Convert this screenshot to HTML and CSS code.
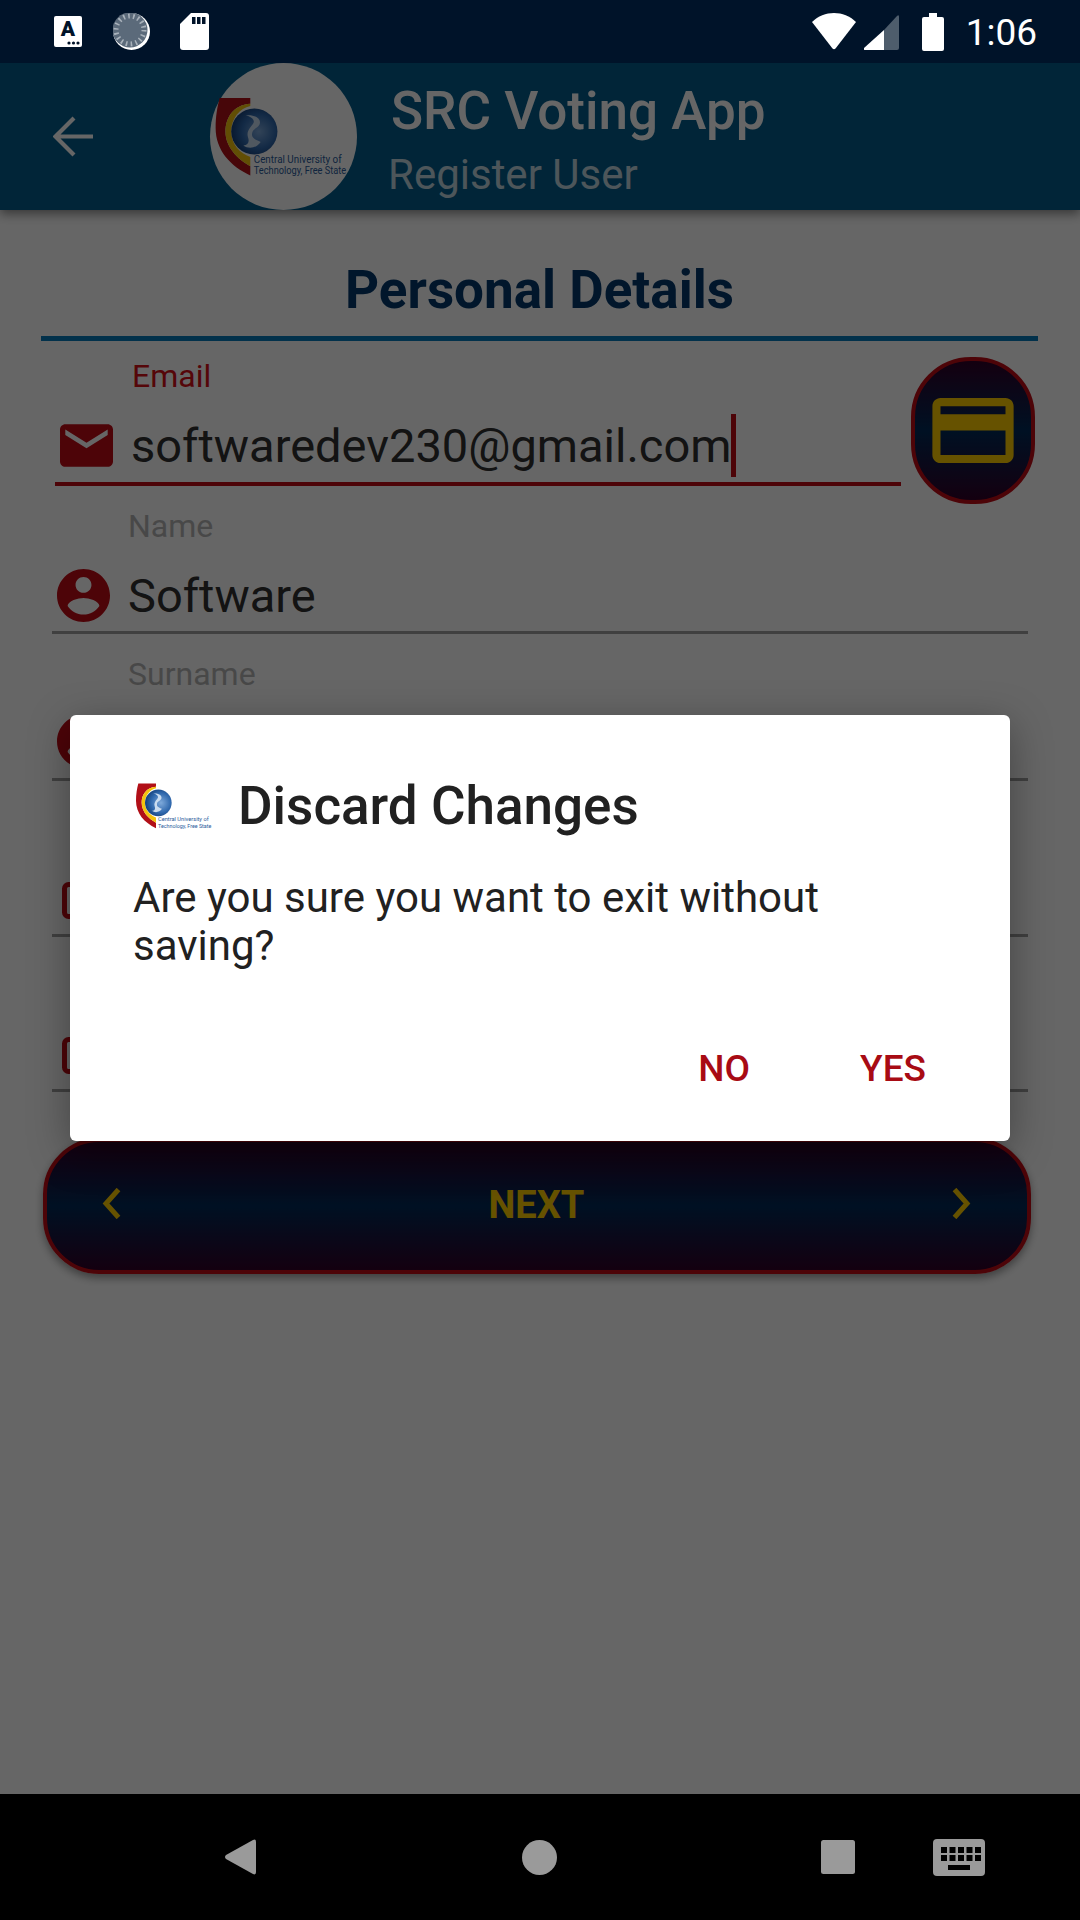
FILE: index.html
```html
<!DOCTYPE html>
<html lang="en">
<head>
<meta charset="utf-8">
<title>SRC Voting App</title>
<link rel="stylesheet" href="styles.css">
</head>
<body>
<svg class="defs" width="0" height="0" aria-hidden="true">
  <defs>
    <radialGradient id="orb" cx="0.6" cy="0.5" r="0.62">
      <stop offset="0" stop-color="#7ea9da"/>
      <stop offset="0.6" stop-color="#2f68ad"/>
      <stop offset="1" stop-color="#123a72"/>
    </radialGradient>
    <symbol id="cut-logo" viewBox="0 0 228 135">
      <path fill="#b10f17" d="M7 0 H60 V10 C30 12 17 35 17 58 C17 85 38 106 60 118 V134 C25 118 0 90 0 52 C0 32 3 14 7 0Z"/>
      <path fill="#f4c20d" d="M60 10 C30 12 17 35 17 58 C17 85 38 106 60 118 V102 C42 96 27 80 27 58 C27 35 42 18 60 14Z"/>
      <circle cx="67" cy="58" r="40" fill="url(#orb)"/>
      <path fill="#c9dbef" d="M52 30 C68 28 80 36 76 46 C72 54 64 52 63 62 C62 70 70 72 78 76 C70 88 56 88 48 82 C56 82 59 76 56 68 C52 56 64 48 66 42 C67 36 60 32 52 30Z"/>
      <text class="logo-text" x="66" y="112" textLength="152" lengthAdjust="spacingAndGlyphs">Central University of</text>
      <text class="logo-text" x="66" y="132" textLength="160" lengthAdjust="spacingAndGlyphs">Technology, Free State</text>
    </symbol>
  </defs>
</svg>

<div class="status">
  <div class="status-left">
    <svg class="i-a" viewBox="0 0 28 31"><rect width="28" height="31" rx="2" fill="#fff"/><text class="a-glyph" x="14" y="20" text-anchor="middle">A</text><circle cx="15" cy="27" r="1.6" fill="#001329"/><circle cx="19.5" cy="27" r="1.6" fill="#001329"/><circle cx="24" cy="27" r="1.6" fill="#001329"/></svg>
    <svg class="i-sync" viewBox="0 0 37 37"><circle cx="18.5" cy="18.5" r="18.5" fill="#fff"/><circle cx="17" cy="17" r="17.5" fill="#5b6a7a"/><circle cx="17" cy="17" r="14" fill="none" stroke="#a9b2bb" stroke-width="5" stroke-dasharray="1.6 3.3"/></svg>
    <svg class="i-sd" viewBox="0 0 29 37"><path fill="#fff" d="M11 0 H26 Q29 0 29 3 V34 Q29 37 26 37 H3 Q0 37 0 34 V11 Z"/><rect x="12" y="4" width="3.5" height="7" fill="#001329"/><rect x="17" y="4" width="3.5" height="7" fill="#001329"/><rect x="22" y="4" width="3.5" height="7" fill="#001329"/></svg>
  </div>
  <div class="status-right">
    <svg class="i-wifi" viewBox="0 0 44 37"><path fill="#fff" d="M0 9 C12 -3 32 -3 44 9 L23.500 35.500 Q22 37 20.500 35.500 Z"/></svg>
    <svg class="i-signal" viewBox="0 0 35 35"><path fill="#4e5d6c" d="M20 15 L33 1 Q35 -1 35 2 V33 Q35 35 33 35 H20 Z"/><path fill="#fff" d="M0 33 L20 15 V35 H1 Q-1 35 0 33 Z"/></svg>
    <svg class="i-batt" viewBox="0 0 22 38"><path fill="#fff" d="M7 0 H15 V4 H20 Q22 4 22 6 V36 Q22 38 20 38 H2 Q0 38 0 36 V6 Q0 4 2 4 H7 Z"/></svg>
    <span class="clock">1:06</span>
  </div>
</div>

<div class="screen">
  <header class="appbar">
    <svg class="back" viewBox="0 0 41 41"><path d="M40 20.500 H3 M21 2 L2.500 20.500 L21 39" fill="none" stroke="#fff" stroke-width="4.200"/></svg>
    <div class="avatar"><svg class="avatar-logo"><use href="#cut-logo"/></svg></div>
    <div class="titles">
      <div class="app-title">SRC Voting App</div>
      <div class="app-sub">Register User</div>
    </div>
  </header>

  <main class="content">
    <h1 class="heading">Personal Details</h1>

    <div class="email-row">
      <div class="field field-email">
        <div class="label label-active">Email</div>
        <div class="value-row">
          <svg class="icon-mail" viewBox="2 4 20 16"><path d="M20 4H4c-1.1 0-1.99.9-1.99 2L2 18c0 1.1.9 2 2 2h16c1.1 0 2-.9 2-2V6c0-1.1-.9-2-2-2zm0 4l-8 5-8-5V6l8 5 8-5v2z"/></svg>
          <span class="value">softwaredev230@gmail.com</span><span class="caret"></span>
        </div>
      </div>
      <button class="card-btn" type="button">
        <svg class="icon-card" viewBox="2 4 20 16"><path d="M20 4H4c-1.11 0-1.99.89-1.99 2L2 18c0 1.11.89 2 2 2h16c1.11 0 2-.89 2-2V6c0-1.11-.89-2-2-2zm0 14H4v-6h16v6zm0-10H4V6h16v2z"/></svg>
      </button>
    </div>

    <div class="field field-name">
      <div class="label">Name</div>
      <div class="value-row">
        <svg class="icon-user" viewBox="2 2 20 20"><path d="M12 2C6.48 2 2 6.48 2 12s4.48 10 10 10 10-4.48 10-10S17.52 2 12 2zm0 3c1.66 0 3 1.34 3 3s-1.34 3-3 3-3-1.34-3-3 1.34-3 3-3zm0 14.200c-2.500 0-4.710-1.280-6-3.220.03-1.990 4-3.080 6-3.080 1.990 0 5.970 1.090 6 3.080-1.290 1.940-3.500 3.220-6 3.220z"/></svg>
        <span class="value">Software</span>
      </div>
    </div>

    <div class="field field-surname">
      <div class="label">Surname</div>
      <div class="value-row">
        <svg class="icon-user" viewBox="2 2 20 20"><path d="M12 2C6.48 2 2 6.48 2 12s4.48 10 10 10 10-4.48 10-10S17.52 2 12 2zm0 3c1.66 0 3 1.34 3 3s-1.34 3-3 3-3-1.34-3-3 1.34-3 3-3zm0 14.200c-2.500 0-4.710-1.280-6-3.220.03-1.990 4-3.080 6-3.080 1.990 0 5.970 1.090 6 3.080-1.290 1.940-3.500 3.220-6 3.220z"/></svg>
      </div>
    </div>

    <div class="field field-blank">
      <svg class="icon-box" viewBox="0 0 52 37"><rect x="2.500" y="2.500" width="47" height="32" rx="4" fill="none" stroke-width="5"/></svg>
    </div>
    <div class="field field-blank field-last">
      <svg class="icon-box" viewBox="0 0 52 37"><rect x="2.500" y="2.500" width="47" height="32" rx="4" fill="none" stroke-width="5"/></svg>
    </div>

    <button class="next-btn" type="button">
      <svg class="chev" viewBox="0 0 19 31"><path d="M16.500 1.500 L4 15.500 L16.500 29.500" fill="none" stroke-width="5"/></svg>
      <span class="next-label">NEXT</span>
      <svg class="chev" viewBox="0 0 19 31"><path d="M2.500 1.500 L15 15.500 L2.500 29.500" fill="none" stroke-width="5"/></svg>
    </button>
  </main>

  <div class="scrim"></div>

  <section class="dialog">
    <div class="dialog-head">
      <svg class="dialog-logo"><use href="#cut-logo"/></svg>
      <h2 class="dialog-title">Discard Changes</h2>
    </div>
    <p class="dialog-body">Are you sure you want to exit without saving?</p>
    <div class="dialog-actions">
      <span class="action">NO</span>
      <span class="action">YES</span>
    </div>
  </section>
</div>

<nav class="navbar">
  <svg class="n-back" viewBox="0 0 32 36"><path d="M1 16 L28 1 Q31 -0.500 31 3 V33 Q31 36.500 28 35 L1 20 Q-1 18 1 16 Z"/></svg>
  <svg class="n-home" viewBox="0 0 35 35"><circle cx="17.500" cy="17.500" r="17.500"/></svg>
  <svg class="n-square" viewBox="0 0 34 34"><rect width="34" height="34" rx="2.500"/></svg>
  <svg class="n-kbd" viewBox="0 0 52 37">
    <rect width="52" height="37" rx="4"/>
    <g fill="#000">
      <rect x="8" y="8" width="6" height="6"/><rect x="16.500" y="8" width="6" height="6"/><rect x="25" y="8" width="6" height="6"/><rect x="33.500" y="8" width="6" height="6"/><rect x="42" y="8" width="6" height="6"/>
      <rect x="8" y="16" width="6" height="6"/><rect x="16.500" y="16" width="6" height="6"/><rect x="25" y="16" width="6" height="6"/><rect x="33.500" y="16" width="6" height="6"/><rect x="42" y="16" width="6" height="6"/>
      <rect x="15" y="26" width="22" height="5"/>
    </g>
  </svg>
</nav>
</body>
</html>
```
FILE: styles.css
```css
* { box-sizing: border-box; }
html, body { margin: 0; padding: 0; }
body {
  width: 1080px;
  height: 1920px;
  display: flex;
  flex-direction: column;
  overflow: hidden;
  background: #fff;
  font-family: Roboto, "Liberation Sans", sans-serif;
}
.defs { position: absolute; }
.logo-text { font-family: Roboto, "Liberation Sans", sans-serif; font-size: 18px; fill: #2a5b9b; }

/* status bar */
.status {
  height: 63px;
  flex: none;
  background: #001329;
  display: flex;
  align-items: center;
  justify-content: space-between;
  padding: 0 43px 0 54px;
}
.status-left, .status-right { display: flex; align-items: center; }
.i-a { width: 28px; height: 31px; margin-right: 31px; }
.a-glyph { font-family: Roboto, sans-serif; font-weight: 900; font-size: 21px; fill: #001329; }
.i-sync { width: 37px; height: 37px; margin-right: 30px; }
.i-sd { width: 29px; height: 37px; }
.i-wifi { width: 44px; height: 37px; margin-right: 8px; }
.i-signal { width: 35px; height: 35px; margin-right: 23px; margin-top: 2px; }
.i-batt { width: 22px; height: 38px; margin-right: 22px; }
.clock { color: #fff; font-size: 37px; line-height: 46px; margin-top: 3px; }

/* screen below status bar */
.screen { position: relative; flex: 1; display: flex; flex-direction: column; background: #fff; overflow: hidden; }
.scrim { position: absolute; inset: 0; background: rgba(0, 0, 0, 0.6); }

.appbar {
  height: 147px;
  flex: none;
  background: #035d8c;
  display: flex;
  align-items: center;
  padding-left: 53px;
  box-shadow: 0 4px 10px rgba(0, 0, 0, 0.45);
  position: relative;
}
.back { width: 41px; height: 41px; margin-right: 116px; }
.avatar {
  width: 147px;
  height: 147px;
  border-radius: 50%;
  background: #fff;
  display: flex;
  align-items: center;
  margin-right: 32px;
  padding: 0 0 0 5px;
  flex: none;
}
.avatar-logo { width: 133px; height: 78px; }
.titles { display: flex; flex-direction: column; }
.app-title { color: #fff; font-size: 53px; font-weight: 500; line-height: 62px; margin-top: 6px; margin-left: 2px; }
.app-sub { color: rgba(255, 255, 255, 0.75); font-size: 42px; line-height: 50px; margin-top: 8px; margin-left: -1px; }

/* content */
.content { flex: 1; display: flex; flex-direction: column; }
.heading {
  margin: 0 42px 0 41px;
  padding: 52px 0 18px;
  height: 131px;
  border-bottom: 5px solid #067abb;
  color: #03386c;
  font-size: 53px;
  line-height: 56px;
  font-weight: 700;
  text-align: center;
}
.field { display: flex; flex-direction: column; }
.label { font-size: 32px; line-height: 34px; color: #b5b5b5; padding-left: 76px; margin-bottom: 20px; }
.label-active { color: #d50f17; padding-left: 77px; }
.value-row { display: flex; align-items: center; height: 64px; }
.value { font-size: 47px; line-height: 64px; color: #303030; padding-top: 2px; }

.email-row { display: flex; align-items: flex-start; padding-left: 55px; }
.field-email {
  width: 846px;
  padding-top: 18px;
  padding-bottom: 5px;
  border-bottom: 4px solid #c10c16;
  margin-right: 10px;
}
.icon-mail { width: 53px; height: 43px; margin: 0 18px 0 5px; fill: #c10c16; flex: none; }
.caret { width: 5px; height: 63px; background: #c10c16; }
.card-btn {
  width: 124px;
  height: 147px;
  margin: 16px 0 0;
  padding: 0;
  border: 4px solid #c10c16;
  border-radius: 60px;
  background: linear-gradient(#320028, #002a58 50%, #320028);
  display: flex;
  align-items: center;
  justify-content: center;
}
.icon-card { width: 82px; height: 65px; fill: #ffcc00; }

.field-name, .field-surname, .field-blank { margin-left: 52px; margin-right: 52px; border-bottom: 3px solid #a0a0a0; }
.field-name { margin-top: 5px; padding-bottom: 4px; }
.field-surname { margin-top: 23px; padding-bottom: 5px; }
.field-surname .label { margin-bottom: 18px; }
.icon-user { width: 53px; height: 53px; margin: 0 18px 0 5px; fill: #c10c16; flex: none; }
.field-blank { height: 156px; justify-content: flex-end; padding: 0 0 15px 10px; }
.field-last { height: 155px; }
.icon-box { width: 52px; height: 37px; stroke: #c10c16; }

.next-btn {
  margin: 46px 49px 0 43px;
  height: 136px;
  border: 4px solid #c10c16;
  border-radius: 56px;
  background: linear-gradient(#320028, #002a58 50%, #320028);
  color: #ffcc00;
  font: 700 38px/44px Roboto, sans-serif;
  display: flex;
  align-items: center;
  justify-content: space-between;
  padding: 0 56px 0 55px;
  box-shadow: 0 4px 8px rgba(0, 0, 0, 0.4);
}
.next-label { margin-bottom: 2px; }
.chev { width: 19px; height: 31px; stroke: #ffcc00; margin-bottom: 5px; }

/* dialog */
.dialog {
  position: absolute;
  left: 70px;
  top: 652px;
  width: 940px;
  height: 426px;
  background: #fff;
  border-radius: 6px;
  box-shadow: 0 10px 40px rgba(0, 0, 0, 0.35);
  padding: 60px 84px 0 63px;
  display: flex;
  flex-direction: column;
}
.dialog-head { display: flex; align-items: center; height: 62px; padding-left: 3px; }
.dialog-logo { width: 76px; height: 46px; margin-right: 26px; flex: none; }
.dialog-title { margin: 0; font-size: 53px; line-height: 62px; font-weight: 500; color: #212121; }
.dialog-body { margin: 37px 0 0; font-size: 42px; line-height: 48px; color: #212121; width: 740px; }
.dialog-actions { display: flex; justify-content: flex-end; gap: 110px; margin-top: 71px; }
.action { font-size: 37px; line-height: 56px; font-weight: 500; color: #a80b14; }

/* nav bar */
.navbar {
  height: 126px;
  flex: none;
  background: #000;
  display: flex;
  align-items: center;
  padding-left: 225px;
}
.navbar svg { fill: #9a9a9a; flex: none; }
.n-back { width: 32px; height: 36px; margin-right: 265px; }
.n-home { width: 35px; height: 35px; margin-right: 264px; }
.n-square { width: 34px; height: 34px; margin-right: 78px; }
.n-kbd { width: 52px; height: 37px; }
```
